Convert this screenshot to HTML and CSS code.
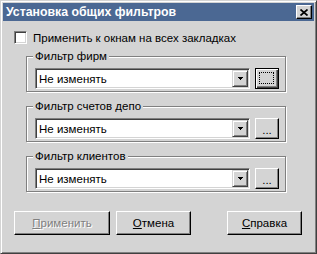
FILE: index.html
```html
<!DOCTYPE html>
<html>
<head>
<meta charset="utf-8">
<link rel="stylesheet" href="styles.css">
</head>
<body>
<div class="window">
  <div class="titlebar">
    <span class="title">Установка общих фильтров</span>
    <button class="close"><svg width="8" height="7" viewBox="0 0 8 7"><path d="M0.5 0.5 L7.5 6.5 M7.5 0.5 L0.5 6.5" stroke="#000" stroke-width="1.7" fill="none"/></svg></button>
  </div>
  <div class="content">
    <label class="check-row"><span class="checkbox"></span><span class="check-text">Применить к окнам на всех закладках</span></label>
    <div class="groups">
      <div class="group">
        <span class="legend">Фильтр фирм</span>
        <div class="row">
          <div class="combo"><span class="combo-text">Не изменять</span><span class="drop"><svg width="5" height="3" viewBox="0 0 5 3" shape-rendering="crispEdges"><rect x="0" y="0" width="5" height="1"/><rect x="1" y="1" width="3" height="1"/><rect x="2" y="2" width="1" height="1"/></svg></span></div>
          <button class="btn dots focused"><span class="focus"></span></button>
        </div>
      </div>
      <div class="group">
        <span class="legend">Фильтр счетов депо</span>
        <div class="row">
          <div class="combo"><span class="combo-text">Не изменять</span><span class="drop"><svg width="5" height="3" viewBox="0 0 5 3" shape-rendering="crispEdges"><rect x="0" y="0" width="5" height="1"/><rect x="1" y="1" width="3" height="1"/><rect x="2" y="2" width="1" height="1"/></svg></span></div>
          <button class="btn dots">...</button>
        </div>
      </div>
      <div class="group">
        <span class="legend">Фильтр клиентов</span>
        <div class="row">
          <div class="combo"><span class="combo-text">Не изменять</span><span class="drop"><svg width="5" height="3" viewBox="0 0 5 3" shape-rendering="crispEdges"><rect x="0" y="0" width="5" height="1"/><rect x="1" y="1" width="3" height="1"/><rect x="2" y="2" width="1" height="1"/></svg></span></div>
          <button class="btn dots">...</button>
        </div>
      </div>
    </div>
    <div class="buttons">
      <button class="btn action apply" disabled><u>П</u>рименить</button>
      <button class="btn action cancel"><u>О</u>тмена</button>
      <button class="btn action help"><u>С</u>правка</button>
    </div>
  </div>
</div>
</body>
</html>
```
FILE: styles.css
```css
* { box-sizing: border-box; }
body {
  margin: 0;
  width: 317px;
  height: 254px;
  overflow: hidden;
  font-family: "Liberation Sans", Arial, sans-serif;
  font-size: 11.5px;
  color: #000;
}
.window {
  width: 317px;
  height: 254px;
  background: #d4d4d4;
  border: 1px solid;
  border-color: #d4d4d4 #404040 #404040 #d4d4d4;
  box-shadow: inset 1px 1px #fff, inset -1px -1px #808080;
  padding: 2px;
  display: flex;
  flex-direction: column;
}
.titlebar {
  height: 18px;
  background: #4b6893;
  display: flex;
  align-items: center;
  justify-content: space-between;
  padding: 0 2px 0 3px;
  color: #fff;
  font-weight: bold;
  font-size: 12.3px;
}
.close {
  width: 16px;
  height: 14px;
  padding: 0;
  margin: 0;
  background: #d4d4d4;
  border: 1px solid;
  border-color: #fff #000 #000 #fff;
  box-shadow: inset -1px -1px #808080;
  display: flex;
  align-items: center;
  justify-content: center;
}
.close svg { display: block; }
.content {
  flex: 1;
  padding: 10px 0 0 11px;
  display: flex;
  flex-direction: column;
}
.check-row {
  display: flex;
  align-items: center;
  gap: 6px;
  height: 13px;
}
.checkbox {
  width: 13px;
  height: 13px;
  background: #fff;
  border: 1px solid;
  border-color: #808080 #fff #fff #808080;
  box-shadow: inset 1px 1px #404040, inset -1px -1px #d4d4d4;
}
.groups {
  margin: 12px 0 0 12px;
  width: 260px;
  display: flex;
  flex-direction: column;
  gap: 14px;
}
.group {
  position: relative;
  height: 36px;
  border: 1px solid #808080;
  box-shadow: inset 1px 1px #fff, 1px 1px #fff;
  padding: 11px 0 0 8px;
}
.legend {
  position: absolute;
  top: -8px;
  left: 6px;
  padding: 0 2px;
  background: #d4d4d4;
  line-height: 14px;
}
.row {
  display: flex;
  gap: 5px;
}
.combo {
  width: 215px;
  height: 21px;
  background: #fff;
  border: 1px solid;
  border-color: #808080 #fff #fff #808080;
  box-shadow: inset 1px 1px #404040, inset -1px -1px #d4d4d4;
  padding: 1px;
  display: flex;
  align-items: center;
  justify-content: space-between;
}
.combo-text { padding-left: 2px; }
.drop {
  width: 16px;
  height: 17px;
  background: #d4d4d4;
  border: 1px solid;
  border-color: #d4d4d4 #404040 #404040 #d4d4d4;
  box-shadow: inset 1px 1px #fff, inset -1px -1px #808080;
  display: flex;
  align-items: center;
  justify-content: center;
}
.drop svg { display: block; fill: #000; }
.btn {
  font-family: inherit;
  font-size: 11.5px;
  color: #000;
  background: #d4d4d4;
  border: 1px solid;
  border-color: #fff #000 #000 #fff;
  box-shadow: inset -1px -1px #808080;
  padding: 0;
  margin: 0;
}
.dots {
  width: 24px;
  height: 21px;
  line-height: 1;
  padding-top: 4px;
}
.dots.focused {
  position: relative;
  border-color: #000;
  box-shadow: inset 1px 1px #fff, inset -1px -1px #404040, inset -2px -2px #808080;
}
.focus {
  position: absolute;
  left: 3px;
  top: 3px;
  right: 4px;
  bottom: 4px;
  border: 1px dotted #000;
}
.buttons {
  display: flex;
  margin-top: 19px;
  height: 24px;
}
.action { height: 24px; }
.apply { width: 96px; color: #808080; text-shadow: 1px 1px #fff; }
.cancel { width: 75px; margin-left: 6px; }
.help { width: 75px; margin-left: 36px; }
```
